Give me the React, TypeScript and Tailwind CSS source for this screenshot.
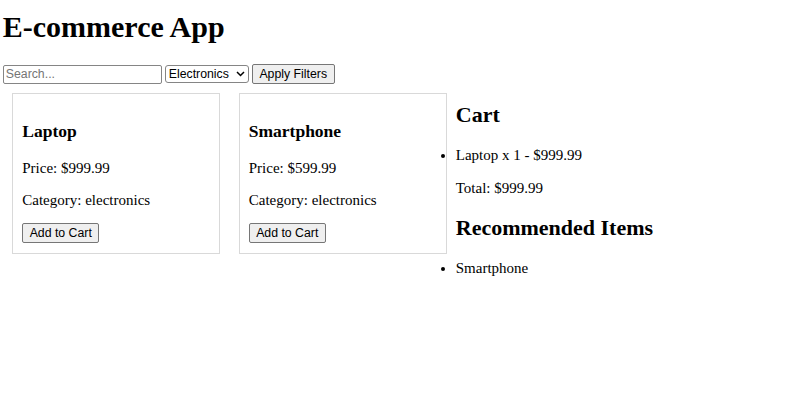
import { useState } from "react"

const products = [
  { id: 1, name: "Laptop", price: 999.99, category: "electronics" },
  { id: 2, name: "Smartphone", price: 599.99, category: "electronics" },
]

const controlFont = { fontFamily: '"Liberation Sans", Arial, sans-serif' }

function ProductCard({ product, onAdd }: { product: any; onAdd: () => void }) {
  return (
    <div className="m-[9.25px] w-[208px] border border-[#d9d9d9] p-[9.25px]">
      <h3 className="mt-[17.3px] mb-[19.3px] text-[17.5px] leading-[20px] font-bold">{product.name}</h3>
      <p className="mb-[15px] text-[15px] leading-[17px]">Price: ${product.price.toFixed(2)}</p>
      <p className="mb-[11px] text-[15px] leading-[17px]">Category: {product.category}</p>
      <button
        onClick={onAdd}
        style={controlFont}
        className="h-[20px] w-[77px] rounded-[2px] border border-[#767676] bg-[#efefef] text-[12.3px] leading-[18px] text-black"
      >
        Add to Cart
      </button>
    </div>
  )
}

function App() {
  const [search, setSearch] = useState("")
  const [category, setCategory] = useState("electronics")
  const [cart, setCart] = useState<any[]>([{ ...products[0], qty: 1 }])

  const total = cart.reduce((sum, item) => sum + item.price * item.qty, 0)

  function addToCart(product: any) {
    const found = cart.find((c) => c.id === product.id)
    if (found) {
      setCart(cart.map((c) => (c.id === product.id ? { ...c, qty: c.qty + 1 } : c)))
    } else {
      setCart([...cart, { ...product, qty: 1 }])
    }
  }

  return (
    <main
      className="min-h-[418px] bg-white pl-[2.75px] text-black"
      style={{ fontFamily: '"Liberation Serif", "Times New Roman", serif' }}
    >
      <h1 className="mt-[10px] text-[30px] leading-[34px] font-bold">E-commerce App</h1>

      <div className="mt-[20px] flex h-[20px] items-center gap-[3px]" style={controlFont}>
        <input
          value={search}
          onChange={(e) => setSearch(e.target.value)}
          placeholder="Search..."
          className="h-[19px] w-[159px] rounded-[2px] border border-[#858585] px-[2px] text-[12.3px] text-black placeholder:text-[#757575] outline-none"
        />
        <div className="flex h-[18px] w-[84px] items-center rounded-[3px] border border-[#858585] pr-[3px]">
          <select
            value={category}
            onChange={(e) => setCategory(e.target.value)}
            className="w-full appearance-none bg-transparent pl-[3px] text-[12.3px] leading-[16px] text-black outline-none"
          >
            <option value="electronics">Electronics</option>
            <option value="all">All</option>
          </select>
          <svg width="9" height="6" viewBox="0 0 9 6" className="shrink-0">
            <path d="M1 1l3.5 3.5L8 1" fill="none" stroke="#000" strokeWidth="1.5" />
          </svg>
        </div>
        <button className="h-[20px] w-[83px] rounded-[2px] border border-[#767676] bg-[#efefef] text-[12.3px] leading-[18px] text-black">
          Apply Filters
        </button>
      </div>

      <div className="flex items-start">
        <div className="flex">
          {products.map((p) => (
            <ProductCard key={p.id} product={p} onAdd={() => addToCart(p)} />
          ))}
        </div>
        <div>
          <h2 className="mt-[18.3px] mb-[18.3px] text-[22px] leading-[25px] font-bold">Cart</h2>
          <ul className="list-disc pl-0 text-[15px] leading-[18px]">
            {cart.map((item) => (
              <li key={item.id}>
                {item.name} x {item.qty} - ${(item.price * item.qty).toFixed(2)}
              </li>
            ))}
          </ul>
          <p className="mt-[15px] text-[15px] leading-[18px]">Total: ${total.toFixed(2)}</p>
          <h2 className="mt-[17px] mb-[18.3px] text-[22px] leading-[27px] font-bold">Recommended Items</h2>
          <ul className="list-disc pl-0 text-[15px] leading-[18px]">
            <li>Smartphone</li>
          </ul>
        </div>
      </div>
    </main>
  )
}

export default App
